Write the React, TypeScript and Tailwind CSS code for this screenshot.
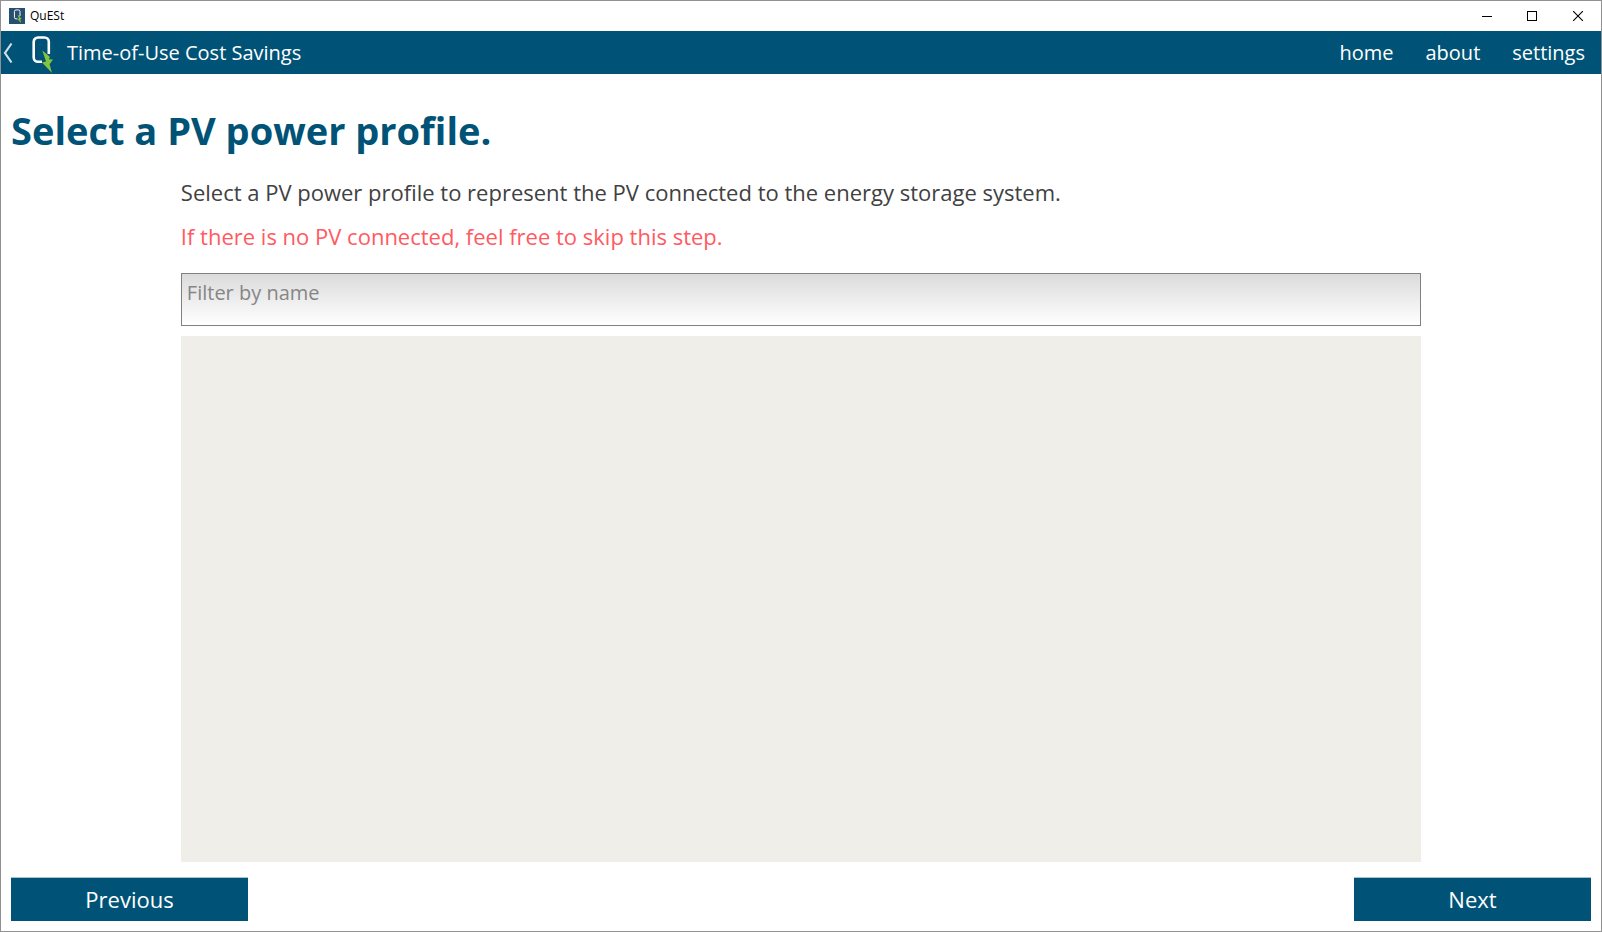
import { useState } from "react";

function QuestLogo({ className }: { className: string }) {
  return (
    <svg viewBox="0 0 22 38" className={className} fill="none" aria-hidden="true">
      <path
        d="M11 26.800H7A4.300 4.300 0 0 1 2.700 22.500V6.800A4.300 4.300 0 0 1 7 2.500H13.500A4.300 4.300 0 0 1 17.800 6.800V19"
        stroke="#ffffff"
        strokeWidth="2.6"
      />
      <path d="M11.300 15.500L19 22L17.800 24.300L22 24.500L18.600 29.300L21 38L11 27.600L15 26.500Z" fill="#84c441" />
    </svg>
  );
}

function TitleBar() {
  return (
    <div className="flex h-[30px] items-center bg-white pl-2">
      <span className="flex size-4 items-center justify-center bg-[#27506f]">
        <QuestLogo className="h-[14px] w-[9px]" />
      </span>
      <span className="ml-[5px] font-['Open_Sans',sans-serif] text-xs text-black">QuESt</span>
      <div className="ml-auto flex h-full pb-px">
        <button type="button" aria-label="Minimize" className="flex w-[45px] items-center justify-center">
          <svg width="10" height="10" viewBox="0 0 10 10" shapeRendering="crispEdges">
            <path d="M0 5.500H10" stroke="#000" />
          </svg>
        </button>
        <button type="button" aria-label="Maximize" className="flex w-[45px] items-center justify-center">
          <svg width="10" height="10" viewBox="0 0 10 10" fill="none" shapeRendering="crispEdges">
            <rect x="0.5" y="0.5" width="9" height="9" stroke="#000" />
          </svg>
        </button>
        <button type="button" aria-label="Close" className="flex w-[47px] items-center justify-center">
          <svg width="10" height="10" viewBox="0 0 10 10">
            <path d="M0 0L10 10M10 0L0 10" stroke="#000" strokeWidth="1.1" />
          </svg>
        </button>
      </div>
    </div>
  );
}

function NavBar() {
  return (
    <header className="flex h-[43px] items-center bg-[#005376] pr-4 text-xl text-white">
      <button type="button" aria-label="Back" className="flex h-full w-[18px] items-center pl-[2px]">
        <svg width="10" height="22" viewBox="0 0 10 22" fill="none">
          <path d="M8.500 1.500L2 11L8.500 20.500" stroke="#d3e0e7" strokeWidth="2.2" />
        </svg>
      </button>
      <QuestLogo className="mt-[3px] ml-3 h-[38px] w-[22px]" />
      <h1 className="ml-[14px]">Time-of-Use Cost Savings</h1>
      <nav className="ml-auto flex gap-8">
        <a href="#home">home</a>
        <a href="#about">about</a>
        <a href="#settings">settings</a>
      </nav>
    </header>
  );
}

export default function App() {
  const [filter, setFilter] = useState("");

  return (
    <div className="flex min-h-screen flex-col border border-[#929292] bg-white font-['Open_Sans','Noto_Sans',sans-serif]">
      <TitleBar />
      <NavBar />
      <main className="flex flex-1 flex-col px-[10px] pt-7 pb-[10px]">
        <h2 className="text-[38px] leading-[56px] font-bold text-[#005376]">Select a PV power profile.</h2>
        <section className="mx-auto mt-3 flex w-[78.5%] flex-1 flex-col">
          <p className="text-[22px] leading-[44px] text-[#3f4142]">
            Select a PV power profile to represent the PV connected to the energy storage system.
          </p>
          <p className="text-[22px] leading-[44px] text-[#ff5a62]">
            If there is no PV connected, feel free to skip this step.
          </p>
          <input
            type="text"
            aria-label="Filter by name"
            placeholder="Filter by name"
            value={filter}
            onChange={(event) => setFilter(event.target.value)}
            className="mt-[15px] h-[53px] w-full border border-[#808080] bg-linear-to-b from-[#dbdbdb] to-white px-[5px] pb-[14px] text-xl text-[#333] outline-none placeholder:text-[#868686]"
          />
          <div className="mt-[10px] flex-1 bg-[#efeee9]" />
        </section>
        <div className="mt-[15px] flex justify-between text-[22px] text-white">
          <button type="button" className="h-11 w-[15%] border-t border-[#a9c0cd] bg-[#005376]">
            Previous
          </button>
          <button type="button" className="h-11 w-[15%] border-t border-[#a9c0cd] bg-[#005376]">
            Next
          </button>
        </div>
      </main>
    </div>
  );
}
